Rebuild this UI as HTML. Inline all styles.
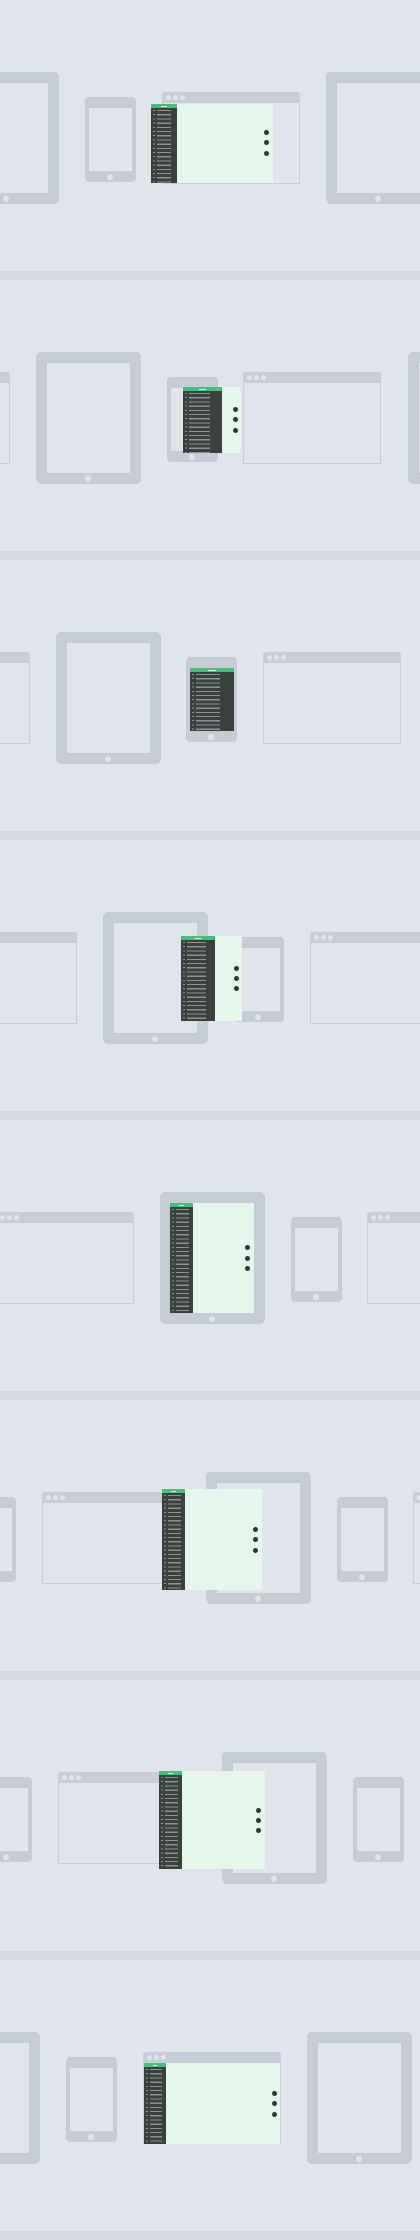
<!DOCTYPE html>
<html><head><style>
html,body{margin:0;padding:0}
body{width:420px;height:2240px;background:#e1e5eb;position:relative;overflow:hidden;font-family:"Liberation Sans",sans-serif}
.p{position:absolute;left:0;width:420px;height:280px;overflow:hidden}
.div{position:absolute;left:0;top:271px;width:420px;height:9px;background:#d5dae1}
.t{position:absolute;top:72px;width:83px;height:110px;border:11px solid #c6ccd6;border-radius:5px;background:#e1e5eb}
.t::after{content:"";position:absolute;left:38px;bottom:-9px;width:6px;height:6px;border-radius:50%;background:#e1e5eb}
.ph{position:absolute;top:97px;width:43px;height:63px;border:4px solid #c6ccd6;border-top-width:11px;border-bottom-width:11px;border-radius:4px;background:#e1e5eb}
.ph::after{content:"";position:absolute;left:18px;bottom:-9px;width:6px;height:6px;border-radius:50%;background:#e1e5eb}
.b{position:absolute;top:92px;width:136px;height:80px;border:1px solid #c8ced8;border-top:11px solid #c8ced8;border-radius:3px 3px 0 0;background:#e1e5eb}
.b::before{content:"";position:absolute;left:3px;top:-8px;width:5px;height:5px;border-radius:50%;background:#e1e5eb;box-shadow:7px 0 0 #e1e5eb,14px 0 0 #e1e5eb}
.g{position:absolute;background:#e5f6ec}
.s{position:absolute;background:#3b413c;overflow:hidden}
.s::before{content:"";position:absolute;left:0;top:0;right:0;height:4px;background:#45c07a}
.s i{position:absolute;left:2px;top:6px;width:1.5px;bottom:0;background:repeating-linear-gradient(#8d948e 0 1px,transparent 1px 4.2px)}
.s b{position:absolute;left:6px;top:6px;width:55%;bottom:0;background:repeating-linear-gradient(#8d948e 0 1.2px,transparent 1.2px 4.2px)}
.s u{position:absolute;left:40%;top:1.5px;width:20%;height:1px;background:#dff5e8}
.d{position:absolute;width:5px;height:5px;border-radius:50%;background:#2f3632}
</style></head><body>

<!-- Panel 1 T=-46 -->
<div class="p" style="top:0">
<div class="t" style="left:-46px"></div><div class="ph" style="left:85px"></div><div class="b" style="left:162px"></div><div class="t" style="left:326px"></div>
<div class="g" style="left:177px;top:104px;width:96px;height:79px"></div>
<div class="s" style="left:151px;top:104px;width:26px;height:79px"><i></i><b></b><u></u></div>
<div class="d" style="left:264px;top:130px"></div><div class="d" style="left:264px;top:140px"></div><div class="d" style="left:264px;top:151px"></div>
<div class="div"></div></div>

<!-- Panel 2 T=36 -->
<div class="p" style="top:280px">
<div class="b" style="left:-128px"></div><div class="t" style="left:36px"></div><div class="ph" style="left:167px"></div><div class="b" style="left:243px"></div><div class="t" style="left:408px"></div>
<div class="g" style="left:222px;top:107px;width:19px;height:66px"></div>
<div class="s" style="left:183px;top:107px;width:39px;height:66px"><i></i><b></b><u></u></div>
<div class="d" style="left:233px;top:127px"></div><div class="d" style="left:233px;top:137px"></div><div class="d" style="left:233px;top:148px"></div>
<div class="div"></div></div>

<!-- Panel 3 T=56 -->
<div class="p" style="top:560px">
<div class="b" style="left:-108px"></div><div class="t" style="left:56px"></div><div class="ph" style="left:186px"></div><div class="b" style="left:263px"></div>
<div class="s" style="left:190px;top:108px;width:44px;height:63px"><i></i><b></b><u></u></div>
<div class="div"></div></div>

<!-- Panel 4 T=103 -->
<div class="p" style="top:840px">
<div class="b" style="left:-61px"></div><div class="t" style="left:103px"></div><div class="ph" style="left:233px"></div><div class="b" style="left:310px"></div>
<div class="g" style="left:215px;top:96px;width:27px;height:85px"></div>
<div class="s" style="left:181px;top:96px;width:34px;height:85px"><i></i><b></b><u></u></div>
<div class="d" style="left:234px;top:126px"></div><div class="d" style="left:234px;top:136px"></div><div class="d" style="left:234px;top:146px"></div>
<div class="div"></div></div>

<!-- Panel 5 T=160 -->
<div class="p" style="top:1120px">
<div class="b" style="left:-4px"></div><div class="t" style="left:160px"></div><div class="ph" style="left:291px"></div><div class="b" style="left:367px"></div>
<div class="g" style="left:193px;top:83px;width:61px;height:110px"></div>
<div class="s" style="left:170px;top:83px;width:23px;height:110px"><i></i><b></b><u></u></div>
<div class="d" style="left:245px;top:125px"></div><div class="d" style="left:245px;top:136px"></div><div class="d" style="left:245px;top:146px"></div>
<div class="div"></div></div>

<!-- Panel 6 T=206 -->
<div class="p" style="top:1400px">
<div class="ph" style="left:-35px"></div><div class="b" style="left:42px"></div><div class="t" style="left:206px"></div><div class="ph" style="left:337px"></div><div class="b" style="left:413px"></div>
<div class="g" style="left:185px;top:89px;width:77px;height:101px"></div>
<div class="s" style="left:162px;top:89px;width:23px;height:101px"><i></i><b></b><u></u></div>
<div class="d" style="left:253px;top:127px"></div><div class="d" style="left:253px;top:137px"></div><div class="d" style="left:253px;top:148px"></div>
<div class="div"></div></div>

<!-- Panel 7 T=222 -->
<div class="p" style="top:1680px">
<div class="ph" style="left:-19px"></div><div class="b" style="left:58px"></div><div class="t" style="left:222px"></div><div class="ph" style="left:353px"></div>
<div class="g" style="left:182px;top:91px;width:83px;height:98px"></div>
<div class="s" style="left:159px;top:91px;width:23px;height:98px"><i></i><b></b><u></u></div>
<div class="d" style="left:256px;top:128px"></div><div class="d" style="left:256px;top:138px"></div><div class="d" style="left:256px;top:148px"></div>
<div class="div"></div></div>

<!-- Panel 8 T=-65 -->
<div class="p" style="top:1960px">
<div class="t" style="left:-65px"></div><div class="ph" style="left:66px"></div><div class="b" style="left:143px"></div><div class="t" style="left:307px"></div>
<div class="g" style="left:166px;top:103px;width:114px;height:81px"></div>
<div class="s" style="left:144px;top:103px;width:22px;height:81px"><i></i><b></b><u></u></div>
<div class="d" style="left:272px;top:131px"></div><div class="d" style="left:272px;top:141px"></div><div class="d" style="left:272px;top:152px"></div>
<div class="div"></div></div>

</body></html>
